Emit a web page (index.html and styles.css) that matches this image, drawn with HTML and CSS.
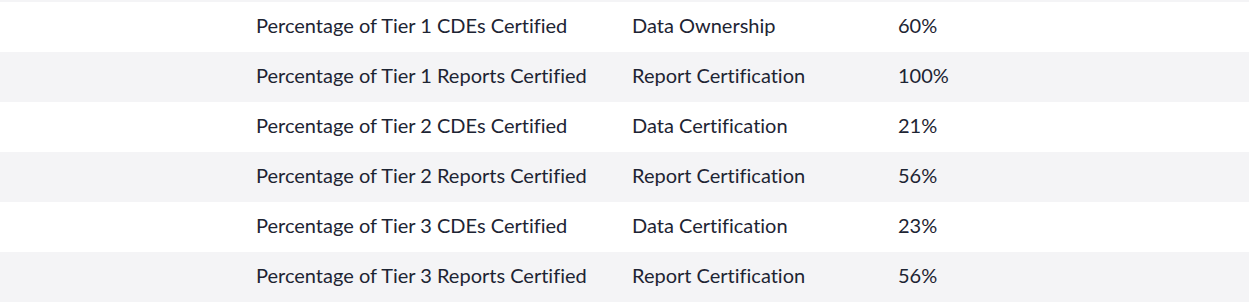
FILE: index.html
```html
<!DOCTYPE html>
<html>
<head>
<meta charset="utf-8">
<link rel="stylesheet" href="styles.css">
</head>
<body>
<div class="table">
  <div class="row"><span class="c1">Percentage of Tier 1 CDEs Certified</span><span class="c2">Data Ownership</span><span class="c3">60%</span></div>
  <div class="row alt"><span class="c1">Percentage of Tier 1 Reports Certified</span><span class="c2">Report Certification</span><span class="c3">100%</span></div>
  <div class="row"><span class="c1">Percentage of Tier 2 CDEs Certified</span><span class="c2">Data Certification</span><span class="c3">21%</span></div>
  <div class="row alt"><span class="c1">Percentage of Tier 2 Reports Certified</span><span class="c2">Report Certification</span><span class="c3">56%</span></div>
  <div class="row"><span class="c1">Percentage of Tier 3 CDEs Certified</span><span class="c2">Data Certification</span><span class="c3">23%</span></div>
  <div class="row alt"><span class="c1">Percentage of Tier 3 Reports Certified</span><span class="c2">Report Certification</span><span class="c3">56%</span></div>
</div>
</body>
</html>
```
FILE: styles.css
```css
html, body {
  margin: 0;
  padding: 0;
  background: #ffffff;
}
body {
  font-family: Lato, "Liberation Sans", sans-serif;
  color: #1d2433;
}
.table {
  border-top: 2px solid #f4f4f6;
}
.row {
  display: grid;
  grid-template-columns: 256px 376px 266px 1fr;
  height: 50px;
  align-items: center;
  font-size: 20px;
  line-height: 24px;
  font-variant-ligatures: none;
  padding-bottom: 4px;
  box-sizing: border-box;
}
.row .c1 { grid-column: 2; }
.row .c2 { grid-column: 3; }
.row .c3 { grid-column: 4; }
.alt {
  background: #f4f4f6;
}
```
